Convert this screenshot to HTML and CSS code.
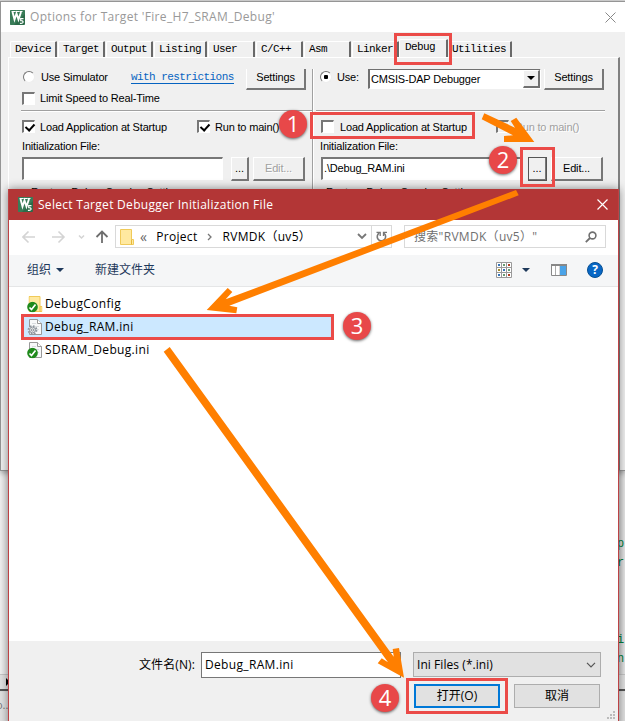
FILE: index.html
```html
<!DOCTYPE html>
<html lang="zh-CN">
<head>
<meta charset="utf-8">
<title>Options for Target</title>
<link rel="stylesheet" href="styles.css">
</head>
<body>
<svg class="defs" width="0" height="0">
  <defs>
    <symbol id="keil" viewBox="0 0 15 15">
      <rect width="15" height="15" rx="1" fill="#2c6b49"/>
      <path d="M0 0h15v4L4 15H0z" fill="#438762" opacity=".6"/>
      <path d="M1.500 1.500h4M5.500 1.500h4M9.500 1.500h3" stroke="#fff" stroke-width="1"/>
      <path d="M2.500 2l2 7.500L6.500 3.500l2 6L11 2" fill="none" stroke="#fff" stroke-width="1.900"/>
      <path d="M13.500 8.700h-2.800v1.900c3-.3 3.400 2.700.2 2.800h-1" fill="none" stroke="#fff" stroke-width="1.200"/>
    </symbol>
    <symbol id="folder" viewBox="0 0 14 16">
      <path d="M.5.5h11v10h2v5H.5z" fill="#ffe9a0" stroke="#f0ca59"/>
      <path d="M11.500 10.500v5" stroke="#e5b93c"/>
    </symbol>
    <symbol id="page" viewBox="0 0 13 16">
      <path d="M.5.5h8l4 4v11H.5z" fill="#f7f8f9" stroke="#999"/>
      <path d="M8.500.5v4h4" fill="#fff" stroke="#999"/>
      <path d="M3 4.500h4M3 7.500h7M3 10.500h7" stroke="#d9dcdf"/>
    </symbol>
    <symbol id="synced" viewBox="0 0 11 11">
      <circle cx="5.500" cy="5.500" r="5.300" fill="#1f8a1c"/>
      <path d="M2.500 6l2 2 4-5" fill="none" stroke="#fff" stroke-width="1.700"/>
    </symbol>
  </defs>
</svg>

<div class="desktop">
  <div class="editor">
    <div class="strip"></div>
    <div class="code"><span>p</span><span>r</span><span class="later">i</span><span>n</span></div>
    <div class="scroll"><b></b></div>
    <div class="status">o...</div>
  </div>

  <section class="options">
    <header class="options-title">
      <svg width="15" height="15"><use href="#keil"/></svg>
      <span class="t-options">Options for Target 'Fire_H7_SRAM_Debug'</span>
      <svg class="close" width="11" height="11"><path d="M.5.5l10 10M10.500.5l-10 10" stroke="#888"/></svg>
    </header>
    <nav class="tabs">
      <span class="tab">Device</span><span class="tab">Target</span><span class="tab">Output</span><span class="tab w54">Listing</span><span class="tab">User</span><span class="tab">C/C++</span><span class="tab">Asm</span><span class="tab last">Linker</span><span class="tab active">Debug</span><span class="tab w64">Utilities</span>
    </nav>
    <div class="panel">
      <div class="col left">
        <div class="top">
          <div class="choices">
            <div class="row"><i class="radio"></i><span class="ui">Use Simulator</span><a class="link">with restrictions</a></div>
            <div class="row"><i class="check"></i><span class="ui">Limit Speed to Real-Time</span></div>
          </div>
          <button class="btn settings">Settings</button>
        </div>
        <div class="row load"><i class="check on"></i><span class="ui">Load Application at Startup</span><i class="check on second"></i><span class="ui">Run to main()</span></div>
        <div class="label ui">Initialization File:</div>
        <div class="filebar"><div class="field"></div><button class="btn dots">...</button><button class="btn edit off">Edit...</button></div>
        <div class="group ui">Restore Debug Session Settings</div>
      </div>
      <div class="col right">
        <div class="top">
          <div class="row userow"><i class="radio sel"></i><span class="ui">Use:</span>
            <div class="combo"><span class="ui">CMSIS-DAP Debugger</span><b class="drop"></b></div>
          </div>
          <button class="btn settings">Settings</button>
        </div>
        <div class="row load"><i class="check"></i><span class="ui">Load Application at Startup</span><i class="check off second"></i><span class="ui off">Run to main()</span></div>
        <div class="label ui">Initialization File:</div>
        <div class="filebar"><div class="field ui"><span class="t-path">.\Debug_RAM.ini</span></div><button class="btn dots focus">...</button><button class="btn edit">Edit...</button></div>
        <div class="group ui">Restore Debug Session Settings</div>
      </div>
    </div>
  </section>

  <section class="dialog">
    <header class="dialog-title">
      <svg width="15" height="15"><use href="#keil"/></svg>
      <span class="t-select">Select Target Debugger Initialization File</span>
      <svg class="close" width="11" height="11"><path d="M.5.5l10 10M10.500.5l-10 10" stroke="#fff" stroke-width="1.200"/></svg>
    </header>
    <div class="nav">
      <svg class="arrows" width="88" height="20" fill="none">
        <path d="M1 10h12M6.500 4.500L1 10l5.500 5.500M30 10h12M36.500 4.500L42 10l-5.500 5.500" stroke="#d4d4d4" stroke-width="1.600"/>
        <path d="M57 8.500l2.500 2.500L62 8.500" stroke="#d4d4d4" stroke-width="1.500"/>
        <path d="M80 16V5M74.500 10L80 4.500l5.500 5.500" stroke="#6e6e6e" stroke-width="1.800"/>
      </svg>
      <div class="address">
        <svg width="14" height="16"><use href="#folder"/></svg>
        <span class="back">«</span><span class="t-project">Project</span>
        <svg class="chev" width="5" height="8" fill="none"><path d="M1 1l3 3-3 3" stroke="#777" stroke-width="1.300"/></svg>
        <span class="t-rvmdk">RVMDK（uv5）</span>
        <svg class="down" width="10" height="7" fill="none"><path d="M1 1l4 4 4-4" stroke="#777" stroke-width="1.800"/></svg>
        <span class="refresh"><svg width="12" height="13" fill="none"><path d="M8 3.300A4.200 4.200 0 1 1 3.300 3" stroke="#777" stroke-width="1.600"/><path d="M.5 2.300h3.700v3.700M11 2.300H7.500V6" stroke="#777" stroke-width="1.300"/></svg></span>
      </div>
      <div class="search">
        <span class="t-search">搜索"RVMDK（uv5）"</span>
        <svg width="12" height="12" fill="none"><circle cx="7.500" cy="4.500" r="3.400" stroke="#707070" stroke-width="1.600"/><path d="M5 7L.8 11.200" stroke="#707070" stroke-width="1.800"/></svg>
      </div>
    </div>
    <div class="toolbar">
      <span class="t-org">组织</span><i class="caret"></i><span class="t-new">新建文件夹</span>
      <svg class="views" width="16" height="16">
        <path d="M.5.5h15v15H.5zM5.500 0v16M10.500 0v16M0 5.500h16M0 10.500h16" fill="#fff" stroke="#999"/>
        <path d="M2 3h2M7 8h2M2 13h2" stroke="#3574b8" stroke-width="2"/><path d="M12 3h2M12 13h2" stroke="#b33c20" stroke-width="2"/><path d="M7 3h2M12 8h2M7 13h2" stroke="#689b72" stroke-width="2"/><path d="M2 8h2" stroke="#a48b29" stroke-width="2"/>
      </svg>
      <i class="caret"></i>
      <svg class="preview" width="16" height="12"><path d="M.5.5h15v11H.5z" fill="#fff" stroke="#888"/><path d="M0 1h16" stroke="#888" stroke-width="2"/><path d="M4.500 2v9M9 2v9" stroke="#aaa"/><path d="M9 2h6v9H9z" fill="#4aa3e8"/></svg>
      <span class="help">?</span>
    </div>
    <div class="files">
      <div class="file"><svg width="16" height="18"><use href="#folder" x="1.500" y="1" width="14" height="16"/><use href="#synced" y="6.500" width="11" height="11"/></svg><span>DebugConfig</span></div>
      <div class="file selected"><svg width="16" height="18"><use href="#page" x="2" y="1" width="13" height="16"/><g fill="#eee" stroke="#8e969e"><circle cx="5.500" cy="12" r="3.900" stroke-width="2" stroke-dasharray="1.600 1.460"/><circle cx="5.500" cy="12" r="2.900"/><circle cx="5.500" cy="12" r="1.200"/></g></svg><span>Debug_RAM.ini</span></div>
      <div class="file"><svg width="16" height="18"><use href="#page" x="2" y="1" width="13" height="16"/><use href="#synced" y="6.500" width="11" height="11"/></svg><span>SDRAM_Debug.ini</span></div>
    </div>
    <footer>
      <div class="name-row">
        <label class="t-name">文件名(N):</label>
        <div class="name-input"><span>Debug_RAM.ini</span></div>
        <div class="type"><span>Ini Files (*.ini)</span><svg width="10" height="6" fill="none"><path d="M1 .8l4 4 4-4" stroke="#555" stroke-width="1.200"/></svg></div>
      </div>
      <div class="actions">
        <button class="action primary">打开(O)</button><button class="action">取消</button>
      </div>
      <svg class="grip" width="8" height="8" fill="#bbb"><path d="M6 0h2v2H6zM3 3h2v2H3zM6 3h2v2H6zM0 6h2v2H0zM3 6h2v2H3zM6 6h2v2H6z"/></svg>
    </footer>
  </section>

  <svg class="marks" width="625" height="721">
    <g fill="none" stroke="#eb4b48" stroke-width="3">
      <path d="M395.500 34.500h55v29h-55zM311.500 113.500h162v24h-162zM521.500 148.500h32v37h-32zM22.500 315.500h310v23h-310zM407.500 679.500h99v33h-99z"/>
    </g>
    <g fill="#ff7f00">
      <path d="M484.300 113.300L515 127.700 510.700 121 516.300 117.700 534.300 142H504v-6l9-.7-31.300-16z"/>
      <path d="M516 190l2.700 5.300L229.300 305.700l8 1.600-1 6L206.700 310l21-22 4.600 4-6.600 7.300z"/>
      <path d="M169.700 347l224 309.700-1-7.700 6.300-1 5 29.700-26.300-14.400 4-5 6.300 4-224.300-310.600z"/>
    </g>
  </svg>
  <b class="badge one">1</b><b class="badge two">2</b><b class="badge three">3</b><b class="badge four">4</b>
</div>
</body>
</html>
```
FILE: styles.css
```css
* { box-sizing: border-box; }
body { margin: 0; overflow: hidden; }
.defs { position: absolute; }
svg { display: block; flex: none; }
span, a, label { white-space: nowrap; }
button { font: inherit; padding: 0; margin: 0; border-radius: 0; }

.desktop { position: relative; width: 625px; height: 721px; overflow: hidden; background: #e9e9e9; font: 12px/16px "Open Sans", "Noto Sans CJK SC", sans-serif; color: #000; }

/* editor behind the windows */
.editor { height: 721px; background: linear-gradient(90deg, #f2f2f2 0, #e6e6e6 8px, #d3d3d3 619px, #e8e8e8 625px); }
.strip { height: 2px; background: #d9d9d9; }
.code { display: flex; flex-direction: column; height: 672px; padding: 533px 0 0 617px; font: 12px/19px "Liberation Mono", monospace; color: #008040; }
.code .later { margin-top: 58px; }
.scroll { height: 17px; border-top: 1px solid #c6c6c6; border-bottom: 2px solid #555; background: #e2e2e2; padding: 3px 6px; }
.scroll b { display: block; width: 0; border: 4px solid transparent; border-left-color: #000; }
.status { height: 30px; padding-top: 5px; border-top: 1px solid #ddd; background: #e2e2e2; color: #777; font-size: 11px; text-indent: -4px; }

/* options window */
.options { position: absolute; left: 0; top: 1px; width: 625px; height: 470px; border: solid #959595; border-width: 1px 0 1px 1px; background: #f0f0f0; font-family: "Liberation Sans", sans-serif; box-shadow: 0 2px 6px #0005; }
.options-title { display: flex; align-items: center; height: 30px; padding: 0 9px; background: #fff; color: #999; font-family: "Open Sans", sans-serif; letter-spacing: .33px; }
.options-title span { margin-left: 5px; }
.options-title .close { margin-left: auto; }
.tabs { display: flex; align-items: flex-end; height: 25px; padding-left: 9px; font: 11px/15px "Liberation Mono", monospace; letter-spacing: -.6px; }
.tab { width: 47px; margin-right: 1px; height: 16px; padding: 0 0 0 4px; border: solid #fff; border-width: 1px 1px 0 1px; border-right: 2px solid #696969; border-radius: 2px 1px 0 0; }
.tab.w54 { width: 53px; }
.tab.last { margin-right: 0; }
.tab.active { width: 49px; height: 18px; padding-left: 5px; }
.tab.w64 { width: 63px; padding-left: 2px; }
.panel { display: flex; width: 612px; height: 413px; margin-left: 7px; border: solid #fff; border-width: 1px 2px 0 1px; border-right-color: #808080; }
.col { height: 121px; margin-top: 11px; overflow: hidden; font-size: 11px; }
.col.left { width: 304px; padding-left: 12px; border-right: 1px solid #a0a0a0; }
.col.right { width: 292px; padding-left: 2px; border-left: 1px solid #fff; }
.top { display: flex; height: 42px; border-bottom: 1px solid #a0a0a0; box-shadow: 0 1px #fff; justify-content: space-between; }
.left .top { padding-right: 6px; }
.right .top { padding-left: 4px; padding-right: 1px; }
.row { display: flex; align-items: center; }
.choices .row { height: 16px; }
.choices .row + .row { margin-top: 5px; }
.radio { flex: none; width: 12px; height: 12px; margin: 0 6px 0 2px; border: 1px solid; border-color: #777 #eee #eee #777; border-radius: 50%; background: #fff; }
.radio.sel { background: radial-gradient(#000 0 2px, #fff 2.500px); margin: 0 5px 0 0; }
.check { flex: none; width: 13px; height: 13px; margin: 0 5px 0 1px; border: solid; border-width: 2px 1px 1px 2px; border-color: #777 #fff #fff #777; background: #fff; }
.check.on::after { content: ""; display: block; width: 4px; height: 7px; margin: 0 0 0 3px; border: solid #000; border-width: 0 2px 2px 0; transform: rotate(42deg); }
.check.off { background: #f0f0f0; }
.right .load .check { margin-right: 6px; }
.link { margin-left: 23px; color: #0563c1; font: 11px/12px "Liberation Mono", monospace; letter-spacing: -.55px; border-bottom: 1px solid; }
.userow { height: 16px; }
.combo { display: flex; width: 173px; height: 21px; margin: 2px 0 0 9px; border: solid; border-width: 2px 1px 1px 2px; border-color: #707070 #fff #fff #707070; background: #fff; justify-content: space-between; padding-left: 1px; }
.combo .ui { line-height: 18px; }
.drop { display: flex; align-items: center; justify-content: center; width: 17px; background: #f0f0f0; border: solid; border-width: 1px 2px 2px 1px; border-color: #fff #707070 #707070 #fff; }
.drop::after { content: ""; border: solid transparent; border-width: 4px 4px 0; border-top-color: #000; }
.btn { width: 60px; height: 24px; background: #f0f0f0; border: solid; border-width: 1px 2px 2px 1px; border-color: #fff #777 #777 #fff; color: #000; font-size: 11px; line-height: 19px; letter-spacing: -.15px; }
.top .btn { margin-top: -3px; }
.load { height: 17px; margin-top: 7px; }
.right .load, .right .label, .right .filebar { margin-left: 4px; }
.load .second { margin-left: 30px; }
.right .load .second { margin-left: 29px; }
.label { height: 16px; margin: 3px 0 3px 1px; }
.filebar { display: flex; height: 23px; }
.field { flex: none; width: 201px; height: 23px; margin: 0 8px 0 1px; border: solid; border-width: 2px 1px 1px 2px; border-color: #777 #fff #fff #777; background: #fff; padding: 1px; }
.dots { flex: none; width: 18px; margin-right: 4px; letter-spacing: 0; }
.dots.focus { outline: 1px solid #555; outline-offset: -1px; margin-left: -2px; width: 19px; }
.edit { flex: none; width: 52px; }
.off { color: #a0a0a0; text-shadow: 1px 1px #fff; }
.group { margin: 6px 0 0 10px; height: 4px; line-height: 12px; overflow: hidden; }
.ui { letter-spacing: -.17px; }

/* file dialog */
.dialog { position: absolute; left: 8px; top: 189px; width: 611px; height: 540px; border: solid #bd4245; border-width: 0 1px; background: #fff; box-shadow: 0 0 9px #0007; }
.dialog-title { display: flex; align-items: center; height: 31px; padding: 0 10px 0 9px; background: #b33636; color: #fff; letter-spacing: .29px; }
.dialog-title span { margin-left: 5px; }
.dialog-title .close { margin-left: auto; }
.nav { display: flex; height: 35px; padding: 5px 12px 0 12px; letter-spacing: .3px; }
.arrows { margin: 2px 6px 0 1px; }
.address { display: flex; align-items: center; width: 277px; height: 23px; border: 1px solid #d9d9d9; padding-left: 4px; margin-left: -1px; }
.back { color: #666; margin-left: 6px; font-size: 14px; }
.t-project { margin-left: 9px; }
.chev { margin: 0 11px 0 9px; }
.down { margin-left: auto; margin-right: 4px; }
.refresh { width: 20px; height: 21px; border-left: 1px solid #d9d9d9; padding: 4px 0 0 4px; }
.search { display: flex; align-items: center; justify-content: space-between; width: 202px; height: 23px; margin-left: 12px; padding: 0 8px 0 9px; border: 1px solid #d9d9d9; color: #707070; }
.toolbar { display: flex; align-items: center; height: 32px; padding: 0 15px 1px 18px; border-bottom: 1px solid #e5e6e7; background: #f5f6f7; color: #1e395b; }
.caret { border: solid transparent; border-width: 4px 4px 0; border-top-color: #1e395b; margin-left: 5px; }
.t-new { margin-left: 31px; }
.views { margin-left: auto; margin-right: 5px; }
.preview { margin: 0 20px 0 21px; }
.help { width: 16px; height: 16px; border: 1px solid #064f93; border-radius: 50%; background: #0867c5; color: #fff; font-weight: 700; line-height: 14px; text-align: center; }
.files { height: 354px; padding: 5px 0 0 13px; letter-spacing: .33px; }
.file { display: flex; align-items: center; width: 311px; height: 23px; padding-left: 5px; }
.file span { margin-left: 2px; }
.selected { background: #cce8ff; }
footer { height: 80px; padding: 11px 17px 0 0; background: #f0f0f0; position: relative; }
.name-row { display: flex; align-items: center; height: 26px; }
.t-name { margin-left: 130px; width: 62px; letter-spacing: .1px; }
.name-input { width: 200px; height: 26px; border: 1px solid #777; background: #fff; padding: 4px 2px; letter-spacing: .33px; }
.name-input span { margin-left: 1px; }
.type { display: flex; align-items: center; justify-content: space-between; width: 188px; height: 25px; margin: -1px 0 0 12px; padding: 0 4px 0 3px; border: 1px solid #adadad; background: #e1e1e1; letter-spacing: .06px; }
.actions { display: flex; justify-content: flex-end; gap: 14px; margin: 6px 1px 0 0; }
.action { width: 86px; height: 24px; border: 1px solid #adadad; background: #e1e1e1; color: #000; line-height: 16px; }
.primary { border: 2px solid #0078d7; }
.grip { position: absolute; right: 3px; top: 70px; }

/* callouts */
.marks { position: absolute; left: 0; top: 0; }
.badge { position: absolute; width: 28px; height: 28px; border-radius: 50%; background: #e84849; color: #fff; font: 22px/27px "Open Sans", sans-serif; text-align: center; box-shadow: 0 1px 3px #0009; }
.one { left: 279px; top: 110px; }
.two { left: 489px; top: 146px; }
.three { left: 343px; top: 312px; }
.four { left: 371px; top: 684px; }
```
